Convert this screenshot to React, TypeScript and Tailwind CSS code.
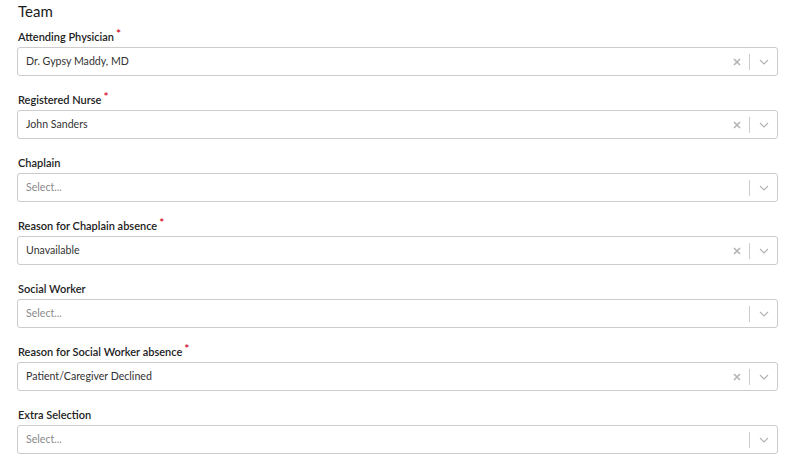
const fields = [
  { label: "Attending Physician", required: true, value: "Dr. Gypsy Maddy, MD" },
  { label: "Registered Nurse", required: true, value: "John Sanders" },
  { label: "Chaplain", required: false, value: "" },
  { label: "Reason for Chaplain absence", required: true, value: "Unavailable" },
  { label: "Social Worker", required: false, value: "" },
  { label: "Reason for Social Worker absence", required: true, value: "Patient/Caregiver Declined" },
  { label: "Extra Selection", required: false, value: "" },
];

function SelectBox({ value }: { value: string }) {
  return (
    <div className="flex h-[29px] items-center rounded-[3px] border border-[#cccccc] bg-white">
      <div className={"flex-1 pl-[8px] text-[10.6px] " + (value ? "text-[#333333]" : "text-[#8a8a8a]")}>
        {value || "Select..."}
      </div>
      {value && (
        <svg width="8" height="8" viewBox="0 0 8 8" className="mr-[8px]">
          <path d="M1 1L7 7M7 1L1 7" stroke="#b3b3b3" strokeWidth="1.6" />
        </svg>
      )}
      <div className="h-[16px] w-px bg-[#cccccc]" />
      <div className="flex w-[27px] justify-center">
        <svg width="10" height="6" viewBox="0 0 10 6">
          <path d="M1 1L5 5L9 1" stroke="#b3b3b3" strokeWidth="1.2" fill="none" />
        </svg>
      </div>
    </div>
  );
}

export default function App() {
  return (
    <div className="h-[460px] w-[796px] bg-white pl-[17px] pr-[18px] text-[#222222]" style={{ fontFamily: "Lato, 'Open Sans', sans-serif" }}>
      <h2 className="h-[22px] pl-px text-[15px] leading-[22px] text-[#1a1a1a]">Team</h2>
      <div className="mt-[7px] flex flex-col gap-[16px]">
        {fields.map((f) => (
          <div key={f.label}>
            <div className="h-[16px] pl-px text-[11px] font-semibold leading-[16px] text-[#222222]">
              {f.label}
              {f.required && <span className="relative -top-[3px] ml-[2px] text-[12px] text-[#d0021b]">*</span>}
            </div>
            <div className="mt-[2px]">
              <SelectBox value={f.value} />
            </div>
          </div>
        ))}
      </div>
    </div>
  );
}
